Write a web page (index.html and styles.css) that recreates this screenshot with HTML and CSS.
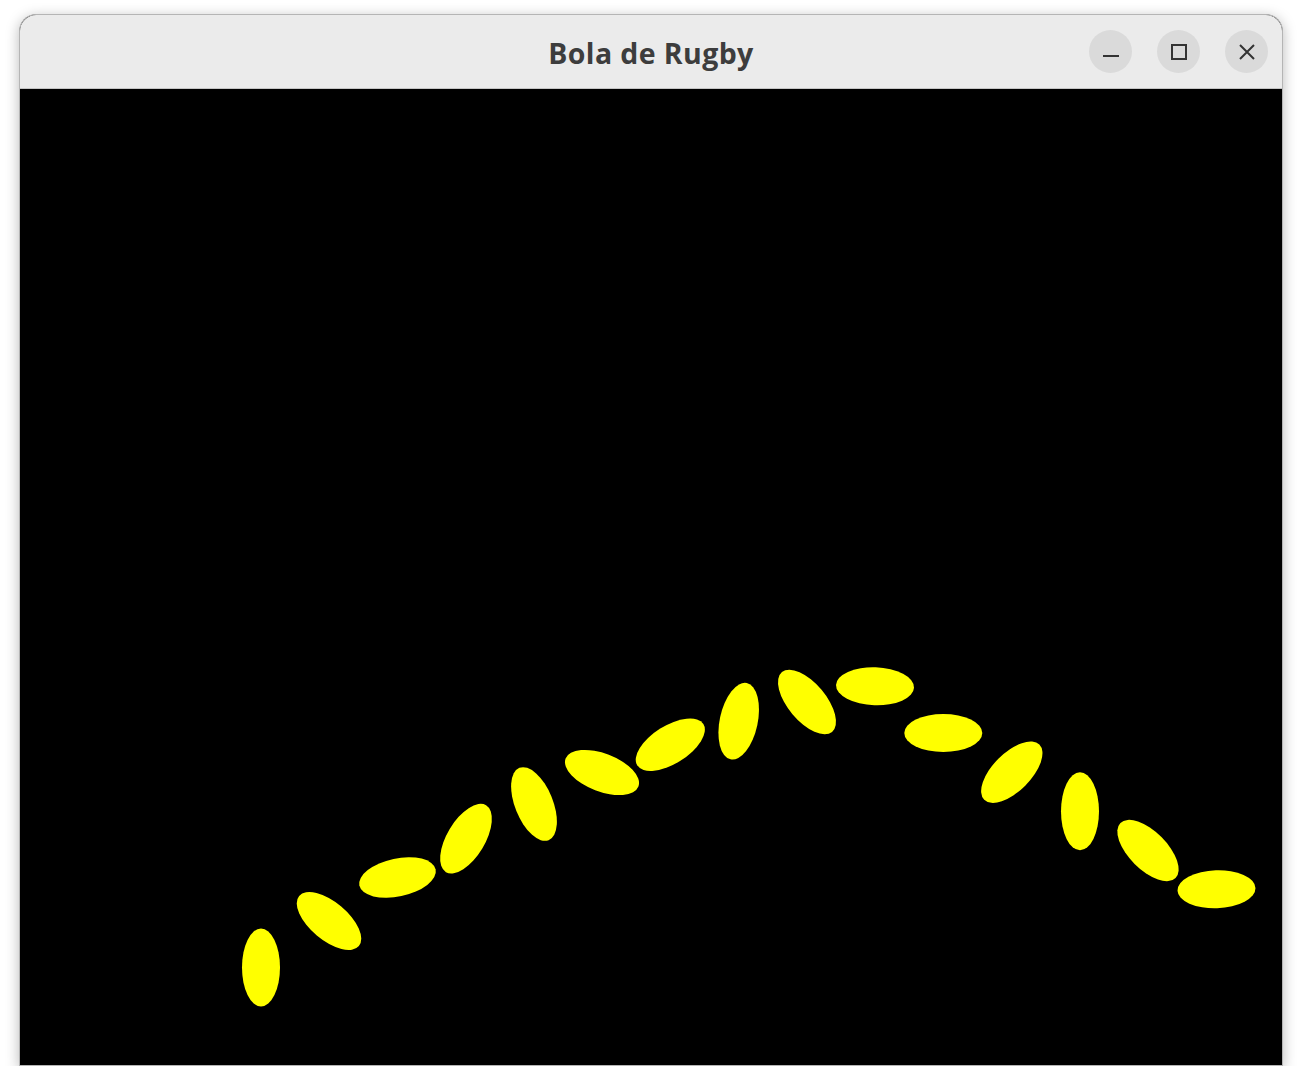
FILE: index.html
```html
<!DOCTYPE html>
<html lang="pt">
<head>
<meta charset="utf-8">
<title>Bola de Rugby</title>
<link rel="stylesheet" href="styles.css">
</head>
<body>
<div class="window">
  <header class="titlebar">
    <div class="title">Bola de Rugby</div>
    <div class="controls">
      <button class="ctl" aria-label="Minimizar">
        <svg width="16" height="16" viewBox="0 0 16 16"><line x1="0" y1="12" x2="16" y2="12" stroke="#333" stroke-width="2"/></svg>
      </button>
      <button class="ctl" aria-label="Maximizar">
        <svg width="16" height="16" viewBox="0 0 16 16"><rect x="1" y="1" width="14" height="14" fill="none" stroke="#333" stroke-width="2"/></svg>
      </button>
      <button class="ctl" aria-label="Fechar">
        <svg width="16" height="16" viewBox="0 0 16 16"><path d="M1 1 L15 15 M15 1 L1 15" stroke="#333" stroke-width="2" fill="none"/></svg>
      </button>
    </div>
  </header>
  <div class="canvas">
    <svg class="scene" width="1262" height="976" viewBox="20 89 1262 976">
      <g fill="#ffff00">
        <ellipse cx="0" cy="0" rx="39" ry="19" transform="translate(261 967.5) rotate(90)"/>
        <ellipse cx="0" cy="0" rx="39" ry="19" transform="translate(329 921) rotate(40)"/>
        <ellipse cx="0" cy="0" rx="39" ry="19" transform="translate(397.5 877.5) rotate(-12)"/>
        <ellipse cx="0" cy="0" rx="39" ry="19" transform="translate(466 838.7) rotate(-59)"/>
        <ellipse cx="0" cy="0" rx="39" ry="19" transform="translate(534 804) rotate(68)"/>
        <ellipse cx="0" cy="0" rx="39" ry="19" transform="translate(602 772.5) rotate(21)"/>
        <ellipse cx="0" cy="0" rx="39" ry="19" transform="translate(670.3 744.7) rotate(-32)"/>
        <ellipse cx="0" cy="0" rx="39" ry="19" transform="translate(738.7 721.2) rotate(-78)"/>
        <ellipse cx="0" cy="0" rx="39" ry="19" transform="translate(807 702) rotate(50)"/>
        <ellipse cx="0" cy="0" rx="39" ry="19" transform="translate(875 686.3) rotate(2)"/>
        <ellipse cx="0" cy="0" rx="39" ry="19" transform="translate(943.3 733) rotate(0)"/>
        <ellipse cx="0" cy="0" rx="39" ry="19" transform="translate(1011.8 772.2) rotate(-45)"/>
        <ellipse cx="0" cy="0" rx="39" ry="19" transform="translate(1080 811.3) rotate(90)"/>
        <ellipse cx="0" cy="0" rx="39" ry="19" transform="translate(1148 850.5) rotate(45)"/>
        <ellipse cx="0" cy="0" rx="39" ry="19" transform="translate(1216.5 889.3) rotate(-2)"/>
      </g>
    </svg>
  </div>
</div>
</body>
</html>
```

FILE: styles.css
```css
html, body {
  margin: 0;
  padding: 0;
  background: #ffffff;
}

body {
  padding: 14px 0 0 19px;
  font-family: "Open Sans", "Noto Sans", "DejaVu Sans", sans-serif;
}

.window {
  width: 1262px;
  border: 1px solid #b5b5b5;
  border-radius: 17px 17px 0 0;
  overflow: hidden;
  box-shadow: 0 3px 14px rgba(0, 0, 0, 0.28);
  background: #000;
}

.titlebar {
  position: relative;
  height: 73px;
  background: #ebebeb;
  border-bottom: 1px solid #c4c4c4;
  display: flex;
  align-items: center;
  justify-content: center;
}

.title {
  font-size: 28.5px;
  font-weight: 700;
  color: #3d3d3d;
  letter-spacing: 0.4px;
  margin-top: 2px;
}

.controls {
  position: absolute;
  right: 14px;
  top: 15px;
  display: flex;
  gap: 25px;
}

.ctl {
  width: 43px;
  height: 43px;
  border-radius: 50%;
  border: 0;
  padding: 0;
  background: #dadada;
  display: flex;
  align-items: center;
  justify-content: center;
}

.ctl svg {
  display: block;
}

.canvas {
  height: 976px;
  background: #000;
}

.scene {
  display: block;
}
```
